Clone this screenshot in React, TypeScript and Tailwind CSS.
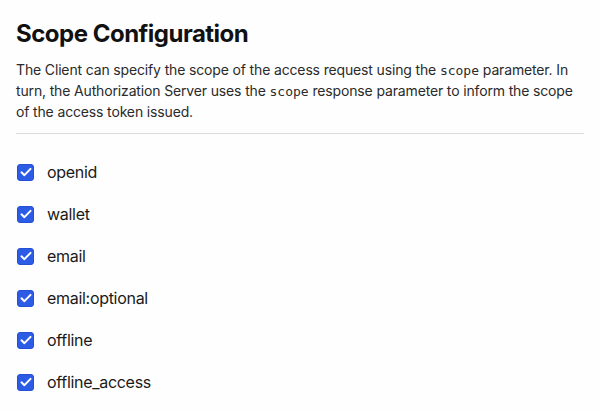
import React from "react";

const scopes = ["openid", "wallet", "email", "email:optional", "offline", "offline_access"];

function Check() {
  return (
    <span className="flex h-[17px] w-[17px] shrink-0 items-center justify-center rounded-[3px] border border-[#2450d4] bg-[#2c5be6]">
      <svg width="14" height="14" viewBox="0 0 16 16" fill="none">
        <path d="M2.8 8.4l3.4 3.2L13.2 4.4" stroke="white" strokeWidth="2.3" strokeLinecap="round" strokeLinejoin="round" />
      </svg>
    </span>
  );
}

export default function App() {
  return (
    <div className="h-[410px] w-[600px] bg-[#fefefe] px-4 pt-[18px] text-[#1a1a1a]" style={{ fontFamily: "Inter, 'Noto Sans', sans-serif" }}>
      <h1 className="text-[24px] font-bold leading-[32px] tracking-[-0.5px] text-[#111]">Scope Configuration</h1>
      <p className="mt-[9px] text-[14px] leading-[21px] tracking-[-0.15px] text-[#2a2a2a]">
        The Client can specify the scope of the access request using the{" "}
        <code className="text-[13px] leading-none tracking-normal" style={{ fontFamily: "'DejaVu Sans Mono', monospace" }}>scope</code> parameter. In turn, the Authorization
        Server uses the{" "}
        <code className="text-[13px] leading-none tracking-normal" style={{ fontFamily: "'DejaVu Sans Mono', monospace" }}>scope</code> response parameter to inform the scope
        of the access token issued.
      </p>
      <div className="mt-[11px] h-px bg-[#dcdcdc]" />
      <ul className="mt-[26px] flex flex-col gap-[18px]">
        {scopes.map((s) => (
          <li key={s} className="flex h-[24px] items-center gap-[13px] pl-px">
            <Check />
            <span className="text-[16px] tracking-[-0.3px] text-[#1a1a1a]">{s}</span>
          </li>
        ))}
      </ul>
    </div>
  );
}
